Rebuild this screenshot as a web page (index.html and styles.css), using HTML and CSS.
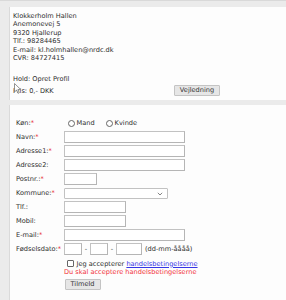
FILE: index.html
```html
<!DOCTYPE html>
<html lang="da">
<head>
<meta charset="UTF-8">
<meta name="viewport" content="width=device-width, initial-scale=1.0">
<title>Opret Profil</title>
<link rel="stylesheet" href="styles.css">
</head>
<body>
<div class="page">
    <!-- Club info -->
    <div class="panel info">
        <div class="address">
            Klokkerholm Hallen<br>
            Anemonevej 5<br>
            9320 Hjallerup<br>
            Tlf.: 98284465<br>
            E-mail: kl.holmhallen@nrdc.dk<br>
            CVR: 84727415
        </div>
        <div class="hold">Hold: Opret Profil</div>
        <div class="price-row">
            <span class="price">Pris: 0,- DKK</span>
            <button class="btn">Vejledning</button>
        </div>
        <svg class="cursor" width="8" height="11" viewBox="0 0 8 11">
            <path d="M0.5 0.5 L0.5 9 L2.6 7.1 L4 10.3 L5.3 9.7 L3.9 6.6 L6.8 6.6 Z" fill="#fff" stroke="#777" stroke-width="0.8" stroke-linejoin="round"/>
        </svg>
    </div>

    <!-- Signup form -->
    <div class="panel form">
        <div class="row">
            <label class="lbl">Køn:<span class="req">*</span></label>
            <div class="field">
                <input type="radio" name="kon" class="radio"><span class="opt">Mand</span>
                <input type="radio" name="kon" class="radio radio-2"><span class="opt">Kvinde</span>
            </div>
        </div>
        <div class="row">
            <label class="lbl">Navn:<span class="req">*</span></label>
            <input type="text" class="inp inp-long">
        </div>
        <div class="row">
            <label class="lbl">Adresse1:<span class="req">*</span></label>
            <input type="text" class="inp inp-long">
        </div>
        <div class="row">
            <label class="lbl">Adresse2:</label>
            <input type="text" class="inp inp-long">
        </div>
        <div class="row">
            <label class="lbl">Postnr.:<span class="req">*</span></label>
            <input type="text" class="inp inp-short">
        </div>
        <div class="row">
            <label class="lbl">Kommune:<span class="req">*</span></label>
            <div class="select-wrap">
                <select class="sel"><option></option></select>
                <svg class="chevron" width="6" height="4" viewBox="0 0 6 4">
                    <path d="M0.8 0.8 L3 3 L5.2 0.8" fill="none" stroke="#666" stroke-width="0.8"/>
                </svg>
            </div>
        </div>
        <div class="row">
            <label class="lbl">Tlf.:</label>
            <input type="text" class="inp inp-mid">
        </div>
        <div class="row">
            <label class="lbl">Mobil:</label>
            <input type="text" class="inp inp-mid">
        </div>
        <div class="row">
            <label class="lbl">E-mail:<span class="req">*</span></label>
            <input type="text" class="inp inp-long">
        </div>
        <div class="row">
            <label class="lbl">Fødselsdato:<span class="req">*</span></label>
            <div class="field">
                <input type="text" class="inp inp-day">
                <span class="dash">-</span>
                <input type="text" class="inp inp-day">
                <span class="dash">-</span>
                <input type="text" class="inp inp-year">
                <span class="hint">(dd-mm-åååå)</span>
            </div>
        </div>
        <div class="terms">
            <input type="checkbox" class="check">
            <span>Jeg accepterer <a href="#" class="link">handelsbetingelserne</a></span>
        </div>
        <div class="error">Du skal acceptere handelsbetingelserne</div>
        <div class="submit">
            <button class="btn btn-submit">Tilmeld</button>
        </div>
    </div>
</div>
</body>
</html>
```

FILE: styles.css
```css
/* Page */
body {
    margin: 0;
    padding: 0;
    height: 300px;
    overflow: hidden;
    background: #ebebeb;
    border-top: 1px solid #d9d9d9;
    font-family: 'DejaVu Sans', Verdana, sans-serif;
    font-size: 6.6px;
    color: #2e2e2e;
}

.page {
    padding: 6px 0 0 9px;
}

.panel {
    background: #fdfdfd;
    border-left: 1px solid #dadada;
}

/* Info panel */
.info {
    position: relative;
    height: 88px;
    padding: 5px 0 0 3px;
}

.address {
    line-height: 8.4px;
}

.hold {
    margin-top: 12.4px;
    line-height: 8.4px;
}

.price-row {
    display: flex;
    align-items: center;
    margin-top: 1.8px;
    height: 11px;
}

.price {
    width: 161px;
}

.btn {
    font-family: 'DejaVu Sans', Verdana, sans-serif;
    font-size: 6.6px;
    color: #333;
    background: #e6e6e6;
    border: 1px solid #c4c4c4;
    border-radius: 1px;
    padding: 0;
    height: 11px;
    width: 46px;
    line-height: 9px;
}

.cursor {
    position: absolute;
    left: 4px;
    top: 76px;
}

/* Form panel */
.form {
    margin-top: 5px;
    height: 200px;
    padding: 11px 0 0 6px;
}

.row {
    display: flex;
    align-items: center;
    height: 14px;
}

.lbl {
    width: 48px;
    flex-shrink: 0;
}

.req {
    color: #e8333a;
}

.field {
    display: flex;
    align-items: center;
}

.radio {
    appearance: none;
    width: 7px;
    height: 7px;
    margin: 0 2px 0 3.5px;
    border: 1px solid #666;
    border-radius: 50%;
    background: #fff;
}

.radio-2 {
    margin-left: 11px;
}

.inp {
    box-sizing: border-box;
    height: 11.5px;
    margin: 0;
    padding: 0;
    border: 1px solid #c2c2c2;
    border-right-color: #b5b5b5;
    border-bottom-color: #b5b5b5;
    background: #fff;
    font-size: 6px;
}

.inp-long {
    width: 121px;
}

.inp-mid {
    width: 62px;
}

.inp-short {
    width: 33px;
}

.inp-day {
    width: 18px;
}

.inp-year {
    width: 26px;
}

.dash {
    width: 8px;
    text-align: center;
}

.hint {
    margin-left: 3px;
}

.select-wrap {
    position: relative;
    display: flex;
}

.sel {
    appearance: none;
    box-sizing: border-box;
    width: 104px;
    height: 11px;
    margin: 0;
    border: 1px solid #c2c2c2;
    border-radius: 1px;
    background: #fff;
    font-size: 6px;
}

.chevron {
    position: absolute;
    right: 5px;
    top: 4px;
}

.terms {
    display: flex;
    align-items: center;
    margin: 3px 0 0 48px;
    height: 9px;
}

.check {
    appearance: none;
    width: 7px;
    height: 7px;
    margin: 0 2.5px 0 3px;
    border: 1px solid #666;
    border-radius: 1px;
    background: #fff;
}

.link {
    color: #3535e6;
}

.error {
    margin-left: 48px;
    height: 9px;
    line-height: 9px;
    color: #f2333a;
}

.submit {
    margin: 2px 0 0 48.5px;
}

.btn-submit {
    width: 36px;
    height: 10.5px;
}
```
